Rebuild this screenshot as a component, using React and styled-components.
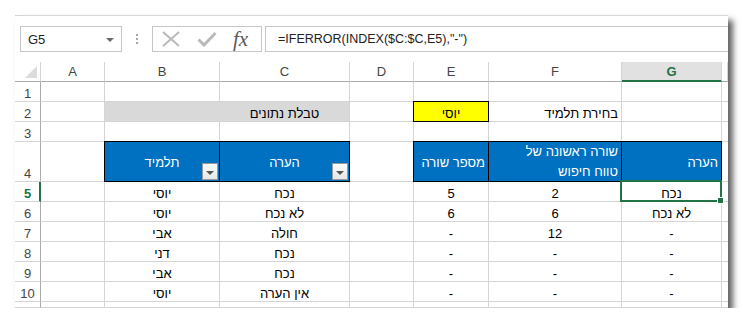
import React from 'react';
import styled, { createGlobalStyle, css } from 'styled-components';

const GRID = '#d4d4d4';
const HEAD_LINE = '#ababab';
const GREEN = '#217346';

const Global = createGlobalStyle`
  html, body { margin: 0; padding: 0; background: #fff; }
  body { font-family: "Liberation Sans", Arial, sans-serif; }
`;

const Page = styled.div`
  padding: 15px 0 0 15px;
`;

const Window = styled.div`
  width: 713px;
  box-sizing: border-box;
  border-top: 1px solid #d6d6d6;
  background: #fff;
  box-shadow: 5px 5px 6px rgba(0, 0, 0, 0.62);
  display: flex;
  flex-direction: column;
  overflow: hidden;
`;

const TopBar = styled.div`
  height: 46px;
  box-sizing: border-box;
  padding: 10px 0 0 5px;
  display: flex;
  align-items: flex-start;
`;

const NameBox = styled.div`
  width: 102px;
  height: 26px;
  box-sizing: border-box;
  border: 1px solid #c6c6c6;
  display: flex;
  align-items: center;
  justify-content: space-between;
  padding: 1px 7px 0 7px;
  font-size: 13px;
  color: #222;
`;

const Caret = styled.span`
  width: 0;
  height: 0;
  border-left: 4px solid transparent;
  border-right: 4px solid transparent;
  border-top: 4px solid #6b6b6b;
`;

const Dots = styled.div`
  width: 30px;
  height: 26px;
  display: flex;
  flex-direction: column;
  align-items: center;
  justify-content: center;
  gap: 2px;
  & > span {
    width: 2px;
    height: 2px;
    background: #a8a8a8;
  }
`;

const FxButtons = styled.div`
  width: 110px;
  height: 26px;
  box-sizing: border-box;
  border: 1px solid #c6c6c6;
  display: flex;
  align-items: center;
  padding-left: 9px;
  gap: 17px;
`;

const FxLabel = styled.span`
  font-family: "Liberation Serif", "Times New Roman", serif;
  font-style: italic;
  font-size: 21px;
  color: #5a5a5a;
  line-height: 1;
  margin-left: -1px;
`;

const FormulaBar = styled.div`
  flex: 1;
  margin-left: 3px;
  height: 26px;
  box-sizing: border-box;
  border: 1px solid #c6c6c6;
  border-right: none;
  display: flex;
  align-items: center;
  padding: 0 0 1px 12px;
  font-size: 12.5px;
  color: #222;
  white-space: nowrap;
`;

const Sheet = styled.div`
  display: grid;
  grid-template-columns: ${p => p.$cols};
  grid-template-rows: ${p => p.$rows};
`;

const Corner = styled.div`
  box-sizing: border-box;
  border-right: 1px solid ${GRID};
  border-bottom: 1px solid ${HEAD_LINE};
  display: flex;
  align-items: flex-end;
  justify-content: flex-end;
  padding: 0 3px 3px 0;
`;

const CornerTri = styled.span`
  width: 0;
  height: 0;
  border-left: 12px solid transparent;
  border-bottom: 12px solid #dcdcdc;
`;

const ColHead = styled.div`
  box-sizing: border-box;
  border-right: 1px solid ${GRID};
  border-bottom: 1px solid ${HEAD_LINE};
  display: flex;
  align-items: center;
  justify-content: center;
  font-size: 13px;
  color: #444;
  ${p => p.$active && css`
    background: #e1e1e1;
    border-bottom: 2px solid ${GREEN};
    color: ${GREEN};
    font-weight: bold;
    padding-top: 1px;
  `}
`;

const RowHead = styled.div`
  box-sizing: border-box;
  border-right: 1px solid ${HEAD_LINE};
  border-bottom: 1px solid ${GRID};
  display: flex;
  align-items: ${p => (p.$partial ? 'flex-start' : 'flex-end')};
  justify-content: center;
  padding-top: ${p => (p.$partial ? '5px' : '0')};
  overflow: hidden;
  font-size: 13px;
  line-height: 15px;
  color: #444;
  ${p => p.$active && css`
    border-right: 2px solid ${GREEN};
    padding-left: 1px;
    color: ${GREEN};
    font-weight: bold;
  `}
`;

const justify = { left: 'flex-start', center: 'center', right: 'flex-end' };

const Cell = styled.div`
  position: relative;
  box-sizing: border-box;
  border-right: 1px solid ${GRID};
  border-bottom: 1px solid ${GRID};
  display: flex;
  align-items: flex-end;
  justify-content: ${p => justify[p.$align || 'center']};
  padding: 0 3px;
  font-size: 13px;
  line-height: 15px;
  color: #000;
  white-space: nowrap;
  text-align: ${p => p.$align || 'center'};
  ${p => p.$kind === 'title' && css`
    background: #d9d9d9;
    ${p.$join && css`border-right-color: #d9d9d9;`}
  `}
  ${p => p.$kind === 'select' && css`
    background: #ffff00;
    border: 1px solid #000;
    margin: -1px 0 0 -1px;
  `}
  ${p => p.$kind === 'head' && css`
    background: #0070c0;
    color: #fff;
    border: 1px solid #000;
    margin: -1px 0 0 -1px;
    align-items: center;
    padding-top: 1px;
  `}
  ${p => p.$wrap && css`
    line-height: 20px;
    padding-top: 0;
  `}
`;

const FilterButton = styled.span`
  position: absolute;
  right: 1px;
  bottom: 1px;
  width: 16px;
  height: 17px;
  box-sizing: border-box;
  border: 1px solid #9a9a9a;
  background: linear-gradient(#fbfbfb, #e6e6e6);
  display: flex;
  align-items: center;
  justify-content: center;
  &::after {
    content: '';
    width: 0;
    height: 0;
    border-left: 4px solid transparent;
    border-right: 4px solid transparent;
    border-top: 4px solid #555;
    margin-top: 2px;
  }
`;

const Selection = styled.span`
  position: absolute;
  left: -2px;
  top: -2px;
  right: -1px;
  bottom: -1px;
  border: 2px solid ${GREEN};
  z-index: 2;
  pointer-events: none;
`;

const FillHandle = styled.span`
  position: absolute;
  right: -4px;
  bottom: -4px;
  width: 5px;
  height: 5px;
  background: ${GREEN};
  border: 1px solid #fff;
`;

const colWidths = [26, 64, 115, 130, 64, 75, 133, 100, 6];
const letters = ['A', 'B', 'C', 'D', 'E', 'F', 'G', 'H'];

const data = (b, c, e, f, g) => ({
  B: { text: b },
  C: { text: c },
  E: { text: e },
  F: { text: f },
  G: { text: g },
});

const rows = [
  { n: 1, h: 20, cells: {} },
  {
    n: 2,
    h: 20,
    cells: {
      B: { kind: 'title', join: true },
      C: { kind: 'title', text: 'טבלת נתונים' },
      E: { kind: 'select', text: 'יוסי' },
      F: { text: 'בחירת תלמיד', align: 'right' },
    },
  },
  { n: 3, h: 20, cells: {} },
  {
    n: 4,
    h: 40,
    cells: {
      B: { kind: 'head', text: 'תלמיד', filter: true },
      C: { kind: 'head', text: 'הערה', filter: true },
      E: { kind: 'head', text: 'מספר שורה', align: 'right' },
      F: { kind: 'head', lines: ['שורה ראשונה של', 'טווח חיפוש'], align: 'right' },
      G: { kind: 'head', text: 'הערה', align: 'right' },
    },
  },
  { n: 5, h: 20, active: true, cells: { ...data('יוסי', 'נכח', '5', '2', 'נכח'), G: { text: 'נכח', selected: true } } },
  { n: 6, h: 20, cells: data('יוסי', 'לא נכח', '6', '6', 'לא נכח') },
  { n: 7, h: 20, cells: data('אבי', 'חולה', '-', '12', '-') },
  { n: 8, h: 20, cells: data('דני', 'נכח', '-', '-', '-') },
  { n: 9, h: 20, cells: data('אבי', 'נכח', '-', '-', '-') },
  { n: 10, h: 20, cells: data('יוסי', 'אין הערה', '-', '-', '-') },
  { n: 11, h: 6, partial: true, cells: {} },
];

function SheetCell({ spec }) {
  const s = spec || {};
  return (
    <Cell $kind={s.kind} $align={s.align} $join={s.join} $wrap={!!s.lines}>
      {s.lines ? (
        <span>
          {s.lines[0]}
          <br />
          {s.lines[1]}
        </span>
      ) : (
        s.text
      )}
      {s.filter && <FilterButton />}
      {s.selected && (
        <Selection>
          <FillHandle />
        </Selection>
      )}
    </Cell>
  );
}

export default function App() {
  const cols = colWidths.map(w => `${w}px`).join(' ');
  const rowTemplate = ['20px', ...rows.map(r => `${r.h}px`)].join(' ');
  return (
    <>
      <Global />
      <Page>
        <Window>
          <TopBar>
            <NameBox>
              <span>G5</span>
              <Caret />
            </NameBox>
            <Dots>
              <span />
              <span />
              <span />
            </Dots>
            <FxButtons>
              <svg width="18" height="16" viewBox="0 0 18 16">
                <path d="M1 1 L17 15 M17 1 L1 15" stroke="#b9b9b9" strokeWidth="2" fill="none" />
              </svg>
              <svg width="20" height="16" viewBox="0 0 20 16">
                <path d="M1.5 8.5 L7 14 L18.5 2" stroke="#b9b9b9" strokeWidth="3" fill="none" />
              </svg>
              <FxLabel>fx</FxLabel>
            </FxButtons>
            <FormulaBar>=IFERROR(INDEX($C:$C,E5),"-")</FormulaBar>
          </TopBar>
          <Sheet $cols={cols} $rows={rowTemplate}>
            <Corner>
              <CornerTri />
            </Corner>
            {letters.map(l => (
              <ColHead key={l} $active={l === 'G'}>
                {l === 'H' ? '' : l}
              </ColHead>
            ))}
            {rows.map(r => (
              <React.Fragment key={r.n}>
                <RowHead $active={r.active} $partial={r.partial}>
                  {r.n}
                </RowHead>
                {letters.map(l => (
                  <SheetCell key={l} spec={r.cells[l]} />
                ))}
              </React.Fragment>
            ))}
          </Sheet>
        </Window>
      </Page>
    </>
  );
}
